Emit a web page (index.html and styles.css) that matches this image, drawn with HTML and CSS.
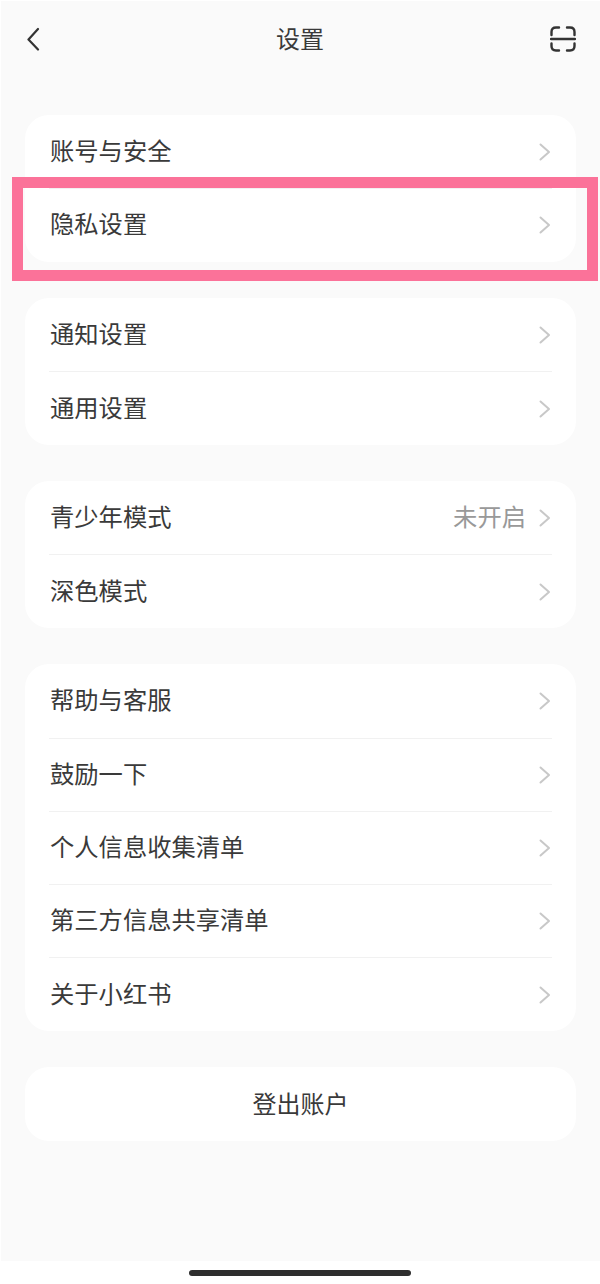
FILE: index.html
```html
<!DOCTYPE html>
<html lang="zh-CN">
<head>
<meta charset="utf-8">
<title>设置</title>
<link rel="stylesheet" href="styles.css">
</head>
<body>
<svg class="sprite" width="0" height="0" aria-hidden="true"><symbol id="chev" viewBox="0 0 12 20"><path d="M1.5 2.5 L10 10 L1.5 17.5" fill="none" stroke="currentColor" stroke-width="2" stroke-linecap="round" stroke-linejoin="round"/></symbol></svg>
<main class="screen">
  <header class="nav">
    <svg class="back" viewBox="0 0 14 24"><path d="M12 2 L2.5 12.500 L12 22.500" fill="none" stroke="#333" stroke-width="2.200" stroke-linecap="round" stroke-linejoin="round"/></svg>
    <h1 class="title">设置</h1>
    <svg class="scan" viewBox="0 0 26 26"><path d="M1.5 9 V6 Q1.500 1.500 6 1.500 H9 M17 1.500 H20 Q24.500 1.500 24.500 6 V9 M1.500 17.500 V20 Q1.500 24.500 6 24.500 H9 M17 24.500 H20 Q24.500 24.500 24.500 20 V17.500 M1 13 H25" fill="none" stroke="#333" stroke-width="2.400" stroke-linecap="round"/></svg>
  </header>
  <section class="card">
    <div class="row"><span class="label">账号与安全</span><svg class="chev"><use href="#chev"/></svg></div>
    <div class="row row-plain"><span class="label">隐私设置</span><svg class="chev"><use href="#chev"/></svg></div>
    <div class="highlight"></div>
  </section>
  <section class="card">
    <div class="row"><span class="label">通知设置</span><svg class="chev"><use href="#chev"/></svg></div>
    <div class="row"><span class="label">通用设置</span><svg class="chev"><use href="#chev"/></svg></div>
  </section>
  <section class="card">
    <div class="row"><span class="label">青少年模式</span><span class="value">未开启</span><svg class="chev"><use href="#chev"/></svg></div>
    <div class="row"><span class="label">深色模式</span><svg class="chev"><use href="#chev"/></svg></div>
  </section>
  <section class="card">
    <div class="row"><span class="label">帮助与客服</span><svg class="chev"><use href="#chev"/></svg></div>
    <div class="row"><span class="label">鼓励一下</span><svg class="chev"><use href="#chev"/></svg></div>
    <div class="row"><span class="label">个人信息收集清单</span><svg class="chev"><use href="#chev"/></svg></div>
    <div class="row"><span class="label">第三方信息共享清单</span><svg class="chev"><use href="#chev"/></svg></div>
    <div class="row"><span class="label">关于小红书</span><svg class="chev"><use href="#chev"/></svg></div>
  </section>
  <section class="card logout"><span class="logout-text">登出账户</span></section>
</main>
<footer class="home"><div class="home-bar"></div></footer>
</body>
</html>
```
FILE: styles.css
```css
* { box-sizing: border-box; }
html, body { margin: 0; padding: 0; background: #fff; }
body {
  width: 600px;
  height: 1284px;
  overflow: hidden;
  font-family: "Noto Sans CJK SC", "Noto Sans", sans-serif;
  color: #3a3a3a;
}
.sprite { position: absolute; }
.screen {
  height: 1260px;
  margin: 1px 0 0 1px;
  padding: 0 24px;
  background: #fafafa;
  display: flex;
  flex-direction: column;
  gap: 36.5px;
}
.nav {
  height: 77.5px;
  display: flex;
  align-items: center;
  justify-content: space-between;
  position: relative;
  margin-left: -24px;
  margin-right: -24px;
  padding-left: 25px;
  padding-right: 24px;
  padding-bottom: 2px;
  flex: none;
}
.back { width: 14px; height: 24px; }
.scan { width: 26px; height: 26px; }
.title {
  position: absolute;
  left: -1px;
  right: 0;
  top: 21px;
  margin: 0;
  text-align: center;
  font-size: 24px;
  line-height: 32px;
  font-weight: 400;
  color: #3a3a3a;
}
.card {
  width: 551px;
  background: #fff;
  border-radius: 24px;
  display: flex;
  flex-direction: column;
  position: relative;
  flex: none;
}
.row {
  height: 73.3px;
  margin: 0 24px;
  display: flex;
  align-items: center;
  font-size: 24.3px;
  position: relative;
  box-shadow: 0 1px 0 #f1f1f1;
}
.row:last-of-type, .row-plain { box-shadow: none; }
.label { margin: 0 0 4px 1px; }
.value {
  margin: 0 13px 4px auto;
  color: #999;
}
.chev {
  width: 12px;
  height: 20px;
  margin-left: auto;
  margin-right: 1px;
  margin-top: 1px;
  color: #c8c8c8;
  flex: none;
}
.value + .chev { margin-left: 0; }
.highlight {
  position: absolute;
  left: -13px;
  top: 62px;
  width: 586px;
  height: 104px;
  border: 11px solid #fb7299;
  pointer-events: none;
}
.logout {
  height: 74px;
  align-items: center;
  justify-content: center;
  font-size: 24px;
}
.logout-text { margin-bottom: 4px; }
.home {
  height: 23px;
  display: flex;
  justify-content: center;
  padding-top: 9px;
}
.home-bar {
  width: 222px;
  height: 6px;
  border-radius: 3px;
  background: #2e2e2e;
}
```
